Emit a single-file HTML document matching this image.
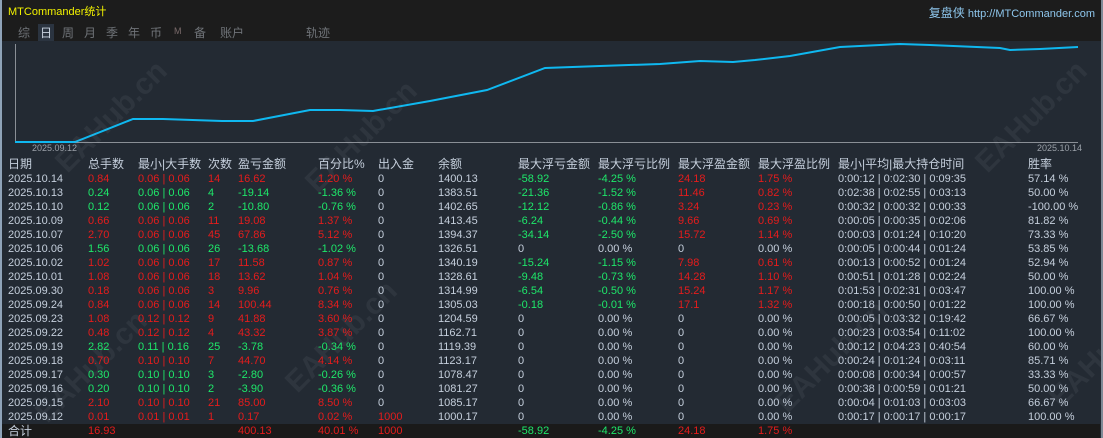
<!DOCTYPE html>
<html><head><meta charset="utf-8"><style>
body{margin:0;width:1103px;height:438px;overflow:hidden;background:#232a33;font-family:"Liberation Sans","Noto Sans CJK SC",sans-serif;font-size:11px;color:#c5cfdc;position:relative}
.top{position:absolute;left:0;top:0;width:1103px;height:41px;background:#1c1c1c}
.lb{position:absolute;left:0;top:0;width:2px;height:438px;background:#8fa3b8}
.rb{position:absolute;right:0;top:0;width:2px;height:438px;background:#7f8a96}
.title{position:absolute;left:8px;top:3px;color:#f2f200;font-size:11px}
.link{position:absolute;right:8px;top:4px;color:#8ec6ec;font-size:11px}
.link b{font-weight:normal;font-size:12px}
.tabs{position:absolute;left:18px;top:24px;color:#6f7378;font-size:12px}
.tabs span{position:absolute;white-space:nowrap}
.sel{background:#2b3440;color:#c9d4e0;padding:0 2px;left:-2px}
.row{position:absolute;left:0;height:14px;line-height:14px;white-space:nowrap;width:1103px}
.row span{position:absolute;top:0}
.hd{font-size:12px;color:#c5cfdc}
.r{color:#e51c1c}.g{color:#1ee86a}
.tot{position:absolute;left:2px;top:424px;width:1098px;height:14px;background:#1a1a1a}
.wm{position:absolute;color:rgba(180,185,195,0.08);font-size:30px;font-weight:bold;transform:rotate(-45deg);white-space:nowrap}
</style></head><body>
<div class="top"></div>
<div class="title">MTCommander统计</div>
<div class="link"><b>复盘侠</b> http://MTCommander.com</div>
<div class="tabs">
<span style="left:0">综</span><span class="sel" style="left:20px">日</span><span style="left:44px">周</span><span style="left:66px">月</span><span style="left:88px">季</span><span style="left:110px">年</span><span style="left:132px">币</span><span style="left:156px;font-size:9px;top:2px;color:#7a6a6a">M</span><span style="left:176px">备</span><span style="left:202px">账户</span><span style="left:288px">轨迹</span>
</div>
<svg style="position:absolute;left:0;top:0" width="1103" height="160">
<line x1="15.5" y1="44" x2="15.5" y2="142" stroke="#8a8f96" stroke-width="1"/>
<line x1="15" y1="142.5" x2="1078" y2="142.5" stroke="#8a8f96" stroke-width="1"/>
<polyline fill="none" stroke="#0fb8f0" stroke-width="2" points="15,142 75,142 133,119 163,119 222,121 253,121 310,110 340,110 373,111 430,101 487,90 545,68 600,66 660,64 700,61 733,62 755,60 790,56 840,47 900,44 930,45 1000,48 1010,50 1040,49 1078,47"/>
<text x="32" y="151" fill="#9aa0a8" font-size="9" font-family="Liberation Sans">2025.09.12</text>
<text x="1037" y="151" fill="#9aa0a8" font-size="9" font-family="Liberation Sans">2025.10.14</text>
</svg>
<div class="wm" style="left:40px;top:100px">EAHub.cn</div>
<div class="wm" style="left:290px;top:120px">EAHub.cn</div>
<div class="wm" style="left:960px;top:100px">EAHub.cn</div>
<div class="wm" style="left:20px;top:350px">EAHub.cn</div>
<div class="wm" style="left:270px;top:320px">EAHub.cn</div>
<div class="wm" style="left:760px;top:340px">EAHub.cn</div>
<div class="wm" style="left:1040px;top:350px">EAHub</div>
<div class="tot"></div>
<div class="lb"></div><div class="rb"></div>
<div id="t"></div>
<div class="row hd" style="top:157px"><span style="left:8px">日期</span><span style="left:88px">总手数</span><span style="left:138px">最小|大手数</span><span style="left:208px">次数</span><span style="left:238px">盈亏金额</span><span style="left:318px">百分比%</span><span style="left:378px">出入金</span><span style="left:438px">余额</span><span style="left:518px">最大浮亏金额</span><span style="left:598px">最大浮亏比例</span><span style="left:678px">最大浮盈金额</span><span style="left:758px">最大浮盈比例</span><span style="left:838px">最小|平均|最大持仓时间</span><span style="left:1028px">胜率</span></div>
<script>
var d=[
["2025.10.14","r","0.84","0.06 | 0.06","14","16.62","1.20 %","0","1400.13","-58.92","-4.25 %","24.18","1.75 %","0:00:12 | 0:02:30 | 0:09:35","57.14 %"],
["2025.10.13","g","0.24","0.06 | 0.06","4","-19.14","-1.36 %","0","1383.51","-21.36","-1.52 %","11.46","0.82 %","0:02:38 | 0:02:55 | 0:03:13","50.00 %"],
["2025.10.10","g","0.12","0.06 | 0.06","2","-10.80","-0.76 %","0","1402.65","-12.12","-0.86 %","3.24","0.23 %","0:00:32 | 0:00:32 | 0:00:33","-100.00 %"],
["2025.10.09","r","0.66","0.06 | 0.06","11","19.08","1.37 %","0","1413.45","-6.24","-0.44 %","9.66","0.69 %","0:00:05 | 0:00:35 | 0:02:06","81.82 %"],
["2025.10.07","r","2.70","0.06 | 0.06","45","67.86","5.12 %","0","1394.37","-34.14","-2.50 %","15.72","1.14 %","0:00:03 | 0:01:24 | 0:10:20","73.33 %"],
["2025.10.06","g","1.56","0.06 | 0.06","26","-13.68","-1.02 %","0","1326.51","0","0.00 %","0","0.00 %","0:00:05 | 0:00:44 | 0:01:24","53.85 %"],
["2025.10.02","r","1.02","0.06 | 0.06","17","11.58","0.87 %","0","1340.19","-15.24","-1.15 %","7.98","0.61 %","0:00:13 | 0:00:52 | 0:01:24","52.94 %"],
["2025.10.01","r","1.08","0.06 | 0.06","18","13.62","1.04 %","0","1328.61","-9.48","-0.73 %","14.28","1.10 %","0:00:51 | 0:01:28 | 0:02:24","50.00 %"],
["2025.09.30","r","0.18","0.06 | 0.06","3","9.96","0.76 %","0","1314.99","-6.54","-0.50 %","15.24","1.17 %","0:01:53 | 0:02:31 | 0:03:47","100.00 %"],
["2025.09.24","r","0.84","0.06 | 0.06","14","100.44","8.34 %","0","1305.03","-0.18","-0.01 %","17.1","1.32 %","0:00:18 | 0:00:50 | 0:01:22","100.00 %"],
["2025.09.23","r","1.08","0.12 | 0.12","9","41.88","3.60 %","0","1204.59","0","0.00 %","0","0.00 %","0:00:05 | 0:03:32 | 0:19:42","66.67 %"],
["2025.09.22","r","0.48","0.12 | 0.12","4","43.32","3.87 %","0","1162.71","0","0.00 %","0","0.00 %","0:00:23 | 0:03:54 | 0:11:02","100.00 %"],
["2025.09.19","g","2.82","0.11 | 0.16","25","-3.78","-0.34 %","0","1119.39","0","0.00 %","0","0.00 %","0:00:12 | 0:04:23 | 0:40:54","60.00 %"],
["2025.09.18","r","0.70","0.10 | 0.10","7","44.70","4.14 %","0","1123.17","0","0.00 %","0","0.00 %","0:00:24 | 0:01:24 | 0:03:11","85.71 %"],
["2025.09.17","g","0.30","0.10 | 0.10","3","-2.80","-0.26 %","0","1078.47","0","0.00 %","0","0.00 %","0:00:08 | 0:00:34 | 0:00:57","33.33 %"],
["2025.09.16","g","0.20","0.10 | 0.10","2","-3.90","-0.36 %","0","1081.27","0","0.00 %","0","0.00 %","0:00:38 | 0:00:59 | 0:01:21","50.00 %"],
["2025.09.15","r","2.10","0.10 | 0.10","21","85.00","8.50 %","0","1085.17","0","0.00 %","0","0.00 %","0:00:04 | 0:01:03 | 0:03:03","66.67 %"],
["2025.09.12","r","0.01","0.01 | 0.01","1","0.17","0.02 %","1000","1000.17","0","0.00 %","0","0.00 %","0:00:17 | 0:00:17 | 0:00:17","100.00 %"]];
var xs=[8,88,138,208,238,318,378,438,518,598,678,758,838,1028],h="";
d.forEach(function(r,i){
 var s='<div class="row" style="top:'+(172+i*14)+'px">';
 var vals=[r[0],r[2],r[3],r[4],r[5],r[6],r[7],r[8],r[9],r[10],r[11],r[12],r[13],r[14]];
 vals.forEach(function(v,j){var c="";
  if(j>=1&&j<=5)c=r[1];
  if(j==6&&v!="0")c="r";
  if((j==8||j==9)&&v!="0"&&v!="0.00 %")c="g";
  if((j==10||j==11)&&v!="0"&&v!="0.00 %")c="r";
  s+='<span class="'+c+'" style="left:'+xs[j]+'px">'+v+'</span>';});
 h+=s+'</div>';});
h+='<div class="row" style="top:424px"><span style="left:8px;font-size:12px">合计</span><span class="r" style="left:88px">16.93</span><span class="r" style="left:238px">400.13</span><span class="r" style="left:318px">40.01 %</span><span class="r" style="left:378px">1000</span><span class="g" style="left:518px">-58.92</span><span class="g" style="left:598px">-4.25 %</span><span class="r" style="left:678px">24.18</span><span class="r" style="left:758px">1.75 %</span></div>';
document.getElementById("t").innerHTML=h;
</script>
</body></html>
